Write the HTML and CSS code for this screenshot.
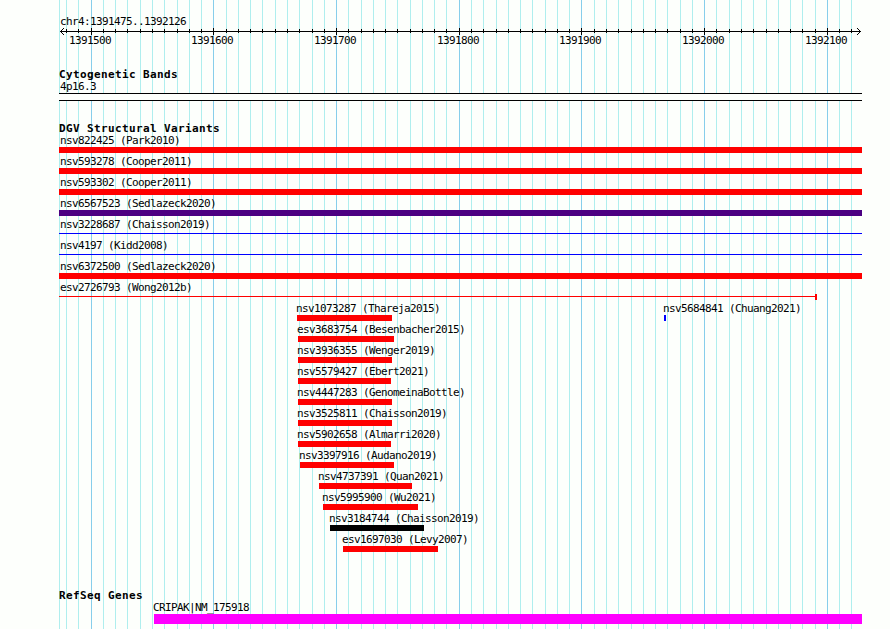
FILE: index.html
```html
<!DOCTYPE html>
<html>
<head>
  <meta charset="utf-8">
  <title>chr4:1391475..1392126</title>
  <link rel="stylesheet" href="styles.css">
</head>
<body>

<svg class="grid" width="890" height="629" shape-rendering="crispEdges">
  <path id="gridMinor" class="minor" />
  <path id="gridMajor" class="major" />
</svg>

<div class="browser">

  <svg class="ruler" width="890" height="67" shape-rendering="crispEdges">
    <text x="60" y="25">chr4:1391475..1392126</text>
    <path class="axis" d="M60 31.5H861" />
    <path id="ticks" class="axis" />
    <path class="arrow" d="M60 31h1v1h-1zM61 30h1v3h-1zM62 29h1v1h-1zM62 33h1v1h-1zM63 28h1v1h-1zM63 34h1v1h-1z" />
    <path class="arrow" d="M860 31h1v1h-1zM859 30h1v3h-1zM858 29h1v1h-1zM858 33h1v1h-1zM857 28h1v1h-1zM857 34h1v1h-1z" />
    <g id="numbers"></g>
  </svg>

  <div class="track cytobands">
    <h2>Cytogenetic Bands</h2>
    <div class="label">4p16.3</div>
    <div class="band"></div>
  </div>

  <div class="track variants">
    <h2>DGV Structural Variants</h2>
    <div class="row full"><div class="feature loss"><span>nsv822425 (Park2010)</span></div></div>
    <div class="row full"><div class="feature loss"><span>nsv593278 (Cooper2011)</span></div></div>
    <div class="row full"><div class="feature loss"><span>nsv593302 (Cooper2011)</span></div></div>
    <div class="row full"><div class="feature complex"><span>nsv6567523 (Sedlazeck2020)</span></div></div>
    <div class="row full"><div class="feature thin gain"><span>nsv3228687 (Chaisson2019)</span></div></div>
    <div class="row full"><div class="feature thin gain"><span>nsv4197 (Kidd2008)</span></div></div>
    <div class="row full"><div class="feature loss"><span>nsv6372500 (Sedlazeck2020)</span></div></div>
    <div class="row full"><div class="feature thin loss capped" style="width: 758px"><span>esv2726793 (Wong2012b)</span></div></div>
    <div class="row">
      <div class="feature loss" style="margin-left: 238px; width: 95px"><span>nsv1073287 (Thareja2015)</span></div>
      <div class="feature gain" style="margin-left: 272px; width: 2px"><span>nsv5684841 (Chuang2021)</span></div>
    </div>
    <div class="row"><div class="feature loss" style="margin-left: 239px; width: 96px"><span>esv3683754 (Besenbacher2015)</span></div></div>
    <div class="row"><div class="feature loss" style="margin-left: 239px; width: 94px"><span>nsv3936355 (Wenger2019)</span></div></div>
    <div class="row"><div class="feature loss" style="margin-left: 239px; width: 93px"><span>nsv5579427 (Ebert2021)</span></div></div>
    <div class="row"><div class="feature loss" style="margin-left: 239px; width: 94px"><span>nsv4447283 (GenomeinaBottle)</span></div></div>
    <div class="row"><div class="feature loss" style="margin-left: 239px; width: 94px"><span>nsv3525811 (Chaisson2019)</span></div></div>
    <div class="row"><div class="feature loss" style="margin-left: 239px; width: 93px"><span>nsv5902658 (Almarri2020)</span></div></div>
    <div class="row"><div class="feature loss" style="margin-left: 241px; width: 94px"><span>nsv3397916 (Audano2019)</span></div></div>
    <div class="row"><div class="feature loss" style="margin-left: 260px; width: 93px"><span>nsv4737391 (Quan2021)</span></div></div>
    <div class="row"><div class="feature loss" style="margin-left: 264px; width: 95px"><span>nsv5995900 (Wu2021)</span></div></div>
    <div class="row"><div class="feature other" style="margin-left: 271px; width: 94px"><span>nsv3184744 (Chaisson2019)</span></div></div>
    <div class="row"><div class="feature loss" style="margin-left: 284px; width: 95px"><span>esv1697030 (Levy2007)</span></div></div>
  </div>

  <div class="track genes">
    <h2>RefSeq Genes</h2>
    <div class="row"><div class="feature gene" style="margin-left: 95px; width: 708px"><span>CRIPAK|NM_175918</span></div></div>
  </div>

</div>

<script>
  // one line every 10 bp, a major one every 100 bp
  let minor = "M59.5 0V629";
  let major = "";
  let ticks = "";
  let numbers = "";

  for (let k = -2; k <= 62; k++) {
    const x = Math.floor(91.15 + 12.27 * k);
    if (k % 10 === 0) {
      major += `M${x + 0.5} 0V629`;
      ticks += `M${x + 0.5} 28V35`;
      numbers += `<text x="${x - 22}" y="44">${1391500 + k * 10}</text>`;
    } else {
      minor += `M${x + 0.5} 0V629`;
      ticks += `M${x + 0.5} 29V33`;
    }
  }

  document.getElementById("gridMinor").setAttribute("d", minor);
  document.getElementById("gridMajor").setAttribute("d", major);
  document.getElementById("ticks").setAttribute("d", ticks);
  document.getElementById("numbers").innerHTML = numbers;
</script>

</body>
</html>
```
FILE: styles.css
```css
body { margin: 0; background: #fdfffc; color: #000; font-family: "DejaVu Sans Mono", "Liberation Mono", monospace; font-size: 11px; letter-spacing: -0.622px; line-height: 12px; overflow: hidden; }
.browser { position: relative; width: 890px; height: 629px; overflow: hidden; }

/* grid lies behind all the tracks */
.grid { position: absolute; left: 0; top: 0; }
.minor { stroke: #afeeee; fill: none; }
.major { stroke: #87ceeb; fill: none; }

.ruler { display: block; }
.axis { stroke: #000; fill: none; }
.arrow { fill: #000; }

.track { margin-left: 59px; width: 803px; }
.track h2 { margin: 0; height: 14px; line-height: 16px; font-size: 11px; font-weight: bold; letter-spacing: 0.378px; white-space: pre; }
.label { height: 12px; padding-left: 1px; line-height: 11px; }

.cytobands { height: 54px; }
.band { box-sizing: border-box; height: 8px; border-top: 1px solid #000; border-bottom: 1px solid #000; background: #fdfffc; }

.variants { height: 467px; }
.row { display: flex; height: 21px; margin-top: -1px; margin-bottom: 1px; }
.feature { flex: none; height: 6px; padding-top: 13px; background: #f00 content-box; }
.feature span { display: block; height: 12px; line-height: 14px; margin: -13px 0 1px -1px; white-space: nowrap; }
.full .feature { width: 803px; }
.full .feature span { margin-left: 1px; }

.loss { background-color: #f00; }
.gain { background-color: #00f; }
.complex { background-color: #4b0082; }
.other { background-color: #000; }
.thin { height: 1px; padding-top: 15px; }
.thin span { margin-top: -15px; }
.capped::after { content: ""; display: block; width: 2px; height: 6px; margin: 0 0 0 auto; background: #f00; }
.gene { height: 10px; background-color: #f0f; }
```
